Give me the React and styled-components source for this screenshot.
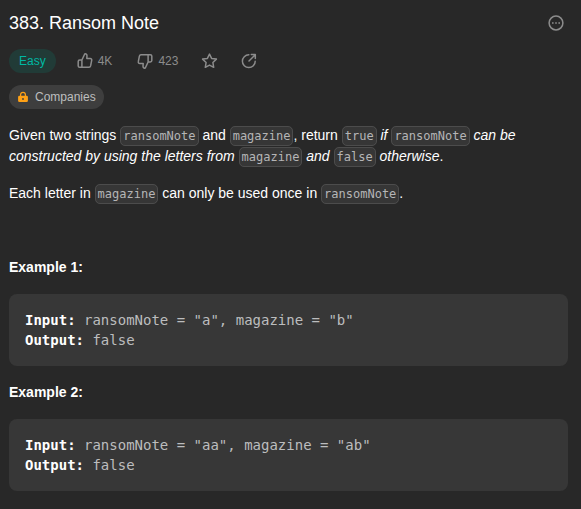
import React from "react";
import styled, { createGlobalStyle } from "styled-components";

const Global = createGlobalStyle`
  * { box-sizing: border-box; }
  body { margin: 0; background: #282828; overflow: hidden; }
`;
const mono = `"DejaVu Sans Mono", monospace`;
const Page = styled.main`
  height: 509px;
  padding: 11px 13px 0 9px;
  background: #282828;
  color: #fff;
  font: 14px/21px "Liberation Sans", Arial, sans-serif;
`;
const Header = styled.header`
  display: flex;
  align-items: center;
  justify-content: space-between;
  height: 24px;
  padding-right: 3px;
  color: #8c8c8c;
`;
const Title = styled.h1`
  margin: 0;
  font-size: 18px;
  line-height: 24px;
  font-weight: 400;
  color: #fff;
`;
const Stats = styled.div`
  display: flex;
  align-items: center;
  height: 24px;
  margin-top: 14px;
  color: #8c8c8c;
  font-size: 12px;
  line-height: 16px;
`;
const Difficulty = styled.span`
  padding: 4px 10px;
  border-radius: 12px;
  background: #213b37;
  color: #00b8a3;
  font-size: 12px;
  margin-right: 20px;
`;
const Stat = styled.span`
  display: flex;
  align-items: center;
  gap: 4px;
  margin-right: ${(p) => p.$gap || 0}px;
`;
const Icon = styled.svg`
  display: block;
  flex: none;
`;
const Companies = styled.div`
  display: flex;
  align-items: center;
  width: 95px;
  height: 24px;
  margin-top: 12px;
  padding-left: 7px;
  gap: 5px;
  border-radius: 12px;
  background: #3e3e3e;
  color: #bdbebf;
  font-size: 12px;
  line-height: 16px;
`;
const Paragraph = styled.p`
  margin: ${(p) => p.$top}px 0 0;
  line-height: 21px;
`;
const Code = styled.code`
  padding: 2px;
  border: 1px solid #4c4c4c;
  border-radius: 5px;
  background: #363636;
  color: #b5b5b6;
  font: 12px ${mono};
  white-space: nowrap;
`;
const Heading = styled.h2`
  margin: ${(p) => p.$top}px 0 0;
  font-size: 14px;
  line-height: 21px;
`;
const Sample = styled.pre`
  height: 72px;
  margin: 16px 0 0;
  padding: 16px;
  border-radius: 8px;
  background: #373737;
  color: #bcbdbe;
  font: 14px/20px ${mono};
  strong { color: #fff; }
`;

const ThumbPath = () => (
  <path d="M5.9 8 8.6 2.2c.5-.8 2.5-.2 2.4 1.5L10.8 6.6h3.4c1 0 1.7.8 1.5 1.7l-1.1 5.6c-.2.8-.7 1.4-1.5 1.4H3.7c-.8 0-1.5-.6-1.5-1.4V9.4C2.2 8.6 2.9 8 3.7 8h2.2Zm0 0v7.3" />
);
const line = { fill: "none", stroke: "currentColor", strokeWidth: 1.5, strokeLinejoin: "round", strokeLinecap: "round" };

function Example({ number, top, input }) {
  return (
    <>
      <Heading $top={top}>Example {number}:</Heading>
      <Sample><strong>Input:</strong>{` ${input}\n`}<strong>Output:</strong> false</Sample>
    </>
  );
}

export default function App() {
  return (
    <Page>
      <Global />
      <Header>
        <Title>383. Ransom Note</Title>
        <Icon width="18" height="18" viewBox="0 0 18 18">
          <circle cx="9" cy="9" r="6.9" fill="none" stroke="currentColor" strokeWidth="1.5" />
          <path d="M5 8.2h1.6v1.6H5zM8.2 8.2h1.6v1.6H8.2zM11.4 8.2H13v1.6h-1.6z" fill="currentColor" />
        </Icon>
      </Header>
      <Stats>
        <Difficulty>Easy</Difficulty>
        <Stat $gap={24}>
          <Icon width="18" height="18" viewBox="0 0 18 18" {...line}><ThumbPath /></Icon>4K
        </Stat>
        <Stat $gap={22}>
          <Icon width="18" height="18" viewBox="0 0 18 18" {...line}>
            <g transform="rotate(180 9 9)"><ThumbPath /></g>
          </Icon>423
        </Stat>
        <Stat $gap={22}>
          <Icon width="18" height="18" viewBox="0 0 18 18" {...line}>
            <path d="m9.5 2.1 2.1 4.3 4.8.7-3.5 3.4.8 4.8-4.2-2.2-4.2 2.2.8-4.8-3.5-3.4 4.8-.7Z" />
          </Icon>
        </Stat>
        <Icon width="18" height="18" viewBox="0 0 18 18" {...line}>
          <path d="M8.8 2.8A6.4 6.4 0 1 0 15.2 9.2M9 9l6-6M11.3 2.6h4v4" />
        </Icon>
      </Stats>
      <Companies>
        <Icon width="14" height="14" viewBox="0 0 14 14">
          <path d="M4.6 6V4.7a2.4 2.4 0 0 1 4.8 0V6" fill="none" stroke="#ffa116" strokeWidth="1.2" />
          <rect x="2.1" y="5.7" width="9.8" height="6.4" rx="1.3" fill="#ffa116" />
          <circle cx="7" cy="9" r=".9" fill="#3e3e3e" />
        </Icon>
        Companies
      </Companies>
      <Paragraph $top={16}>
        Given two strings <Code>ransomNote</Code> and <Code>magazine</Code>, return <Code>true</Code> <em>if</em> <Code>ransomNote</Code> <em>can be constructed by using the letters from </em><Code>magazine</Code><em> and </em><Code>false</Code> <em>otherwise</em>.
      </Paragraph>
      <Paragraph $top={16}>
        Each letter in <Code>magazine</Code> can only be used once in <Code>ransomNote</Code>.
      </Paragraph>
      <Example number={1} top={53} input={'ransomNote = "a", magazine = "b"'} />
      <Example number={2} top={16} input={'ransomNote = "aa", magazine = "ab"'} />
    </Page>
  );
}
